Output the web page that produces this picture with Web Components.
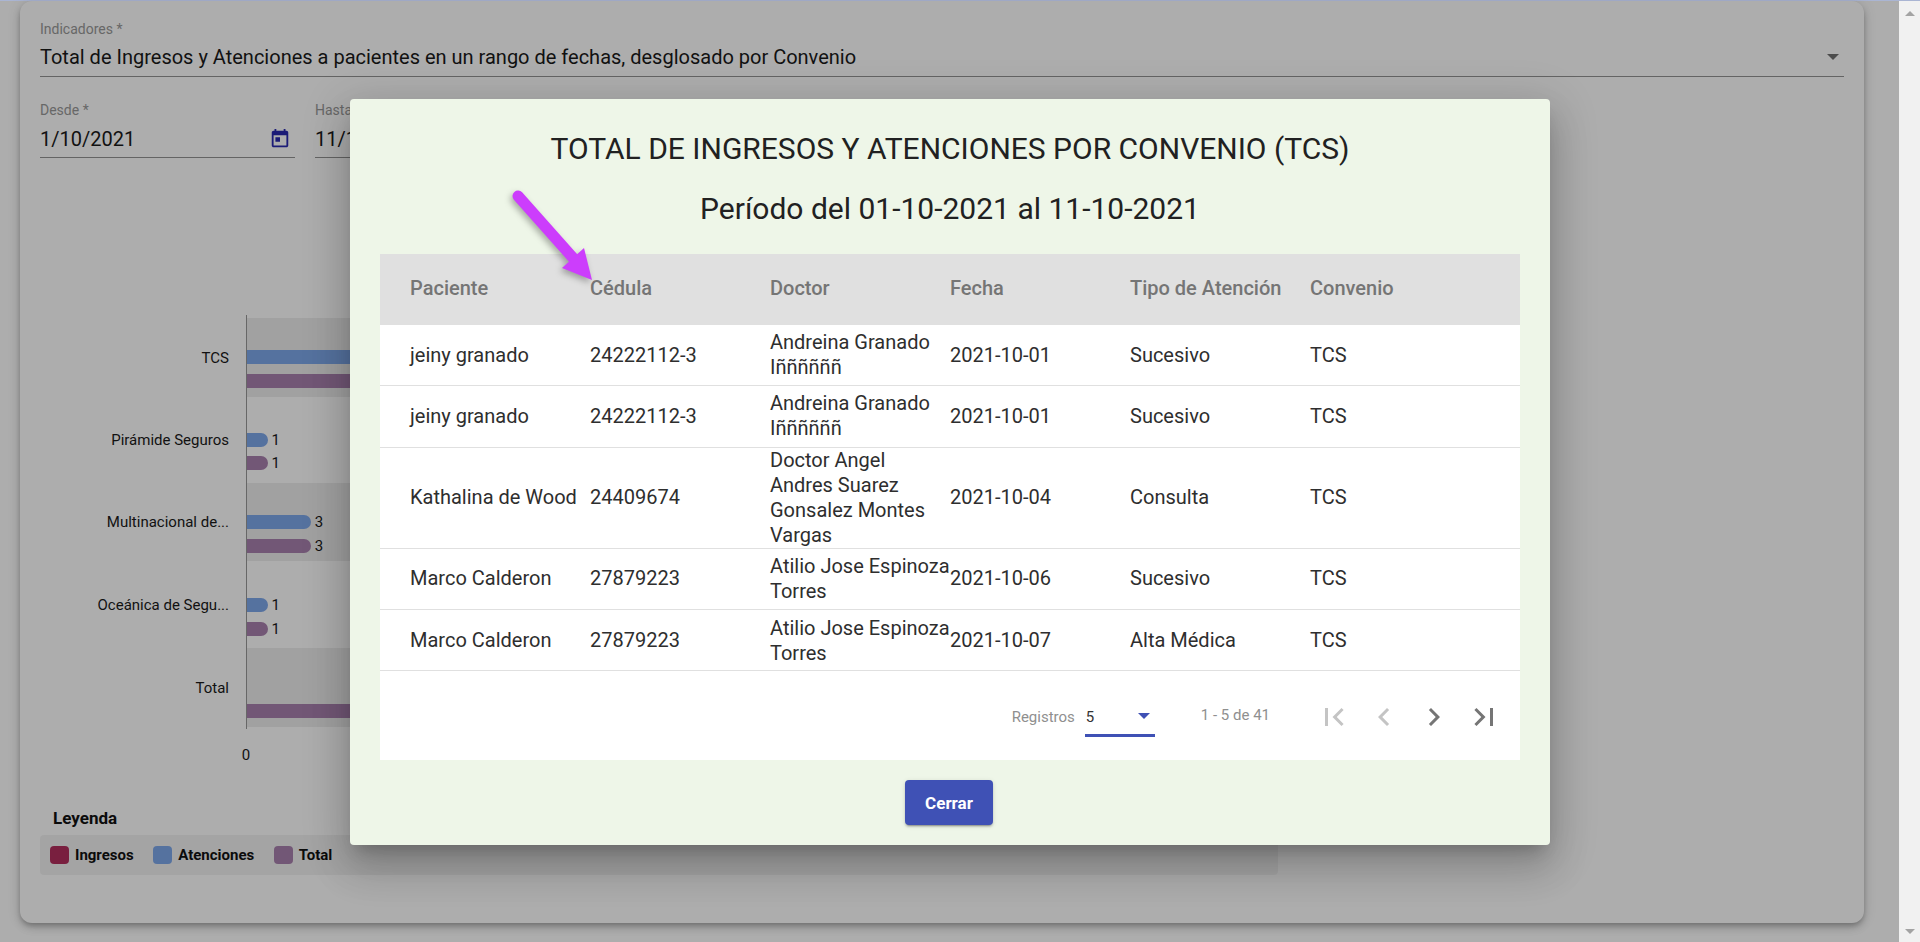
<!DOCTYPE html>
<html lang="es">
<head>
<meta charset="utf-8">
<title>Indicadores</title>
<style>
    html, body { margin: 0; height: 100%; overflow: hidden; }
    body { font-family: Roboto, "Liberation Sans", sans-serif; }
</style>
</head>
<body>
<app-shell>
    <report-card></report-card>
    <report-dialog slot="overlay"></report-dialog>
</app-shell>

<script>
class AppShell extends HTMLElement {
    constructor() {
        super();
        this.attachShadow({ mode: "open" });
        this.shadowRoot.innerHTML = `
            <style>
                :host {
                    display: flex;
                    flex-direction: column;
                    width: 1920px;
                    height: 942px;
                    background: #fff;
                }
                .topline { height: 1px; background: #aab5d3; flex: none; }
                .body { flex: 1; display: flex; min-height: 0; }
                main {
                    flex: 1;
                    position: relative;
                    padding: 0 35px 0 20px;
                    min-width: 0;
                }
                .backdrop {
                    position: absolute;
                    inset: 0;
                    padding: 1px 0 0 1px;
                    background: rgba(0, 0, 0, .32);
                    display: flex;
                    align-items: center;
                    justify-content: center;
                }
                .scrollbar {
                    width: 21px;
                    flex: none;
                    background: #f1f1f1;
                    display: flex;
                    flex-direction: column;
                    justify-content: space-between;
                    align-items: center;
                    padding: 10px 0 8px;
                    box-sizing: border-box;
                }
                .up, .down { width: 0; height: 0; border: 5px solid transparent; }
                .up { border-top: 0; border-bottom-color: #a3a3a3; }
                .down { border-bottom: 0; border-top-color: #a3a3a3; }
            </style>
            <div class="topline"></div>
            <div class="body">
                <main>
                    <slot></slot>
                    <div class="backdrop"><slot name="overlay"></slot></div>
                </main>
                <div class="scrollbar"><span class="up"></span><span class="down"></span></div>
            </div>
        `;
    }
}

class FormField extends HTMLElement {
    constructor() {
        super();
        this.attachShadow({ mode: "open" });
        this.shadowRoot.innerHTML = `
            <style>
                :host { display: block; }
                .label { font-size: 14px; line-height: 16px; color: #999; }
                .value {
                    display: flex;
                    justify-content: space-between;
                    align-items: center;
                    height: 24px;
                    margin-top: var(--value-top, 8px);
                    padding-bottom: var(--value-bottom, 7px);
                    border-bottom: 1px solid rgba(0, 0, 0, .42);
                    font-size: 20px;
                    line-height: 24px;
                    color: #1a1a1a;
                    white-space: nowrap;
                }
                ::slotted(svg) { display: block; flex: none; margin-right: 4px; }
                .arrow {
                    width: 0; height: 0;
                    margin-right: 5px;
                    border: 6px solid transparent;
                    border-bottom: 0;
                    border-top-color: #707070;
                }
            </style>
            <div class="label"></div>
            <div class="value"><span class="text"></span><slot></slot></div>
        `;
    }

    connectedCallback() {
        this.shadowRoot.querySelector(".label").textContent = this.getAttribute("label");
        this.shadowRoot.querySelector(".text").textContent = this.getAttribute("value");
        if (this.hasAttribute("select")) {
            const arrow = document.createElement("span");
            arrow.className = "arrow";
            this.shadowRoot.querySelector(".value").appendChild(arrow);
        }
    }
}

class BarChart extends HTMLElement {
    constructor() {
        super();
        this.attachShadow({ mode: "open" });
        // alto y margen de cada banda, tomados de la captura
        const bands = [
            { label: "TCS", h: 79, top: 32, gap: 10, dark: true, bars: [[1100, "a"], [1100, "t"]] },
            { label: "Pirámide Seguros", h: 86, top: 36, gap: 9, bars: [[1, "a"], [1, "t"]] },
            { label: "Multinacional de...", h: 78, top: 32, gap: 10, dark: true, bars: [[3, "a"], [3, "t"]] },
            { label: "Oceánica de Segu...", h: 87, top: 37, gap: 10, bars: [[1, "a"], [1, "t"]] },
            { label: "Total", h: 79, top: 56, gap: 0, dark: true, bars: [[1100, "t"]] }
        ];
        const rows = bands.map(b => `
            <div class="row" style="height:${b.h}px">
                <div class="name">${b.label}</div>
                <div class="band ${b.dark ? "dark" : ""}" style="padding-top:${b.top}px;gap:${b.gap}px">
                    ${b.bars.map(([v, k]) => v > 100
                        ? `<div class="line"><span class="bar ${k}" style="width:${v}px"></span></div>`
                        : `<div class="line"><span class="bar ${k}" style="width:${v * 21.6}px"></span><span class="num">${v}</span></div>`
                    ).join("")}
                </div>
            </div>`).join("");
        this.shadowRoot.innerHTML = `
            <style>
                :host { display: block; width: 1238px; font-size: 15px; color: #1a1a1a; }
                .plot { padding: 3px 0 2px; position: relative; }
                .plot::before {
                    content: "";
                    position: absolute;
                    left: 206px; top: 0; bottom: 0;
                    width: 1px;
                    background: #999;
                }
                .row { display: flex; }
                .name {
                    width: 189px;
                    padding-right: 17px;
                    flex: none;
                    display: flex;
                    align-items: center;
                    justify-content: flex-end;
                    line-height: 20px;
                    white-space: nowrap;
                }
                .band { flex: 1; display: flex; flex-direction: column; }
                .band.dark { background: rgba(0, 0, 0, .07); }
                .line { display: flex; align-items: center; height: 14px; }
                .bar { height: 14px; border-radius: 0 7px 7px 0; }
                .a { background: #7ea8eb; }
                .t { background: #a981ae; }
                .num { margin-left: 4px; line-height: 14px; }
                .axis { margin: 16px 0 0 200px; width: 12px; text-align: center; line-height: 20px; }
            </style>
            <div class="plot">${rows}</div>
            <div class="axis">0</div>
        `;
    }
}

class ChartLegend extends HTMLElement {
    constructor() {
        super();
        this.attachShadow({ mode: "open" });
        this.shadowRoot.innerHTML = `
            <style>
                :host { display: block; width: 1238px; color: #111; }
                h4 { margin: 0 0 7px 13px; font-size: 17px; line-height: 20px; font-weight: 700; }
                .box {
                    display: flex;
                    align-items: center;
                    gap: 19.5px;
                    height: 40px;
                    padding-left: 10px;
                    border-radius: 4px;
                    background: rgba(0, 0, 0, .05);
                    font-size: 15px;
                    font-weight: 700;
                }
                .item { display: flex; align-items: center; gap: 6px; }
                i { width: 19px; height: 18px; border-radius: 4px; }
            </style>
            <h4>Leyenda</h4>
            <div class="box">
                <div class="item"><i style="background:#b32f5e"></i>Ingresos</div>
                <div class="item"><i style="background:#7ea8eb"></i>Atenciones</div>
                <div class="item"><i style="background:#a981ae"></i>Total</div>
            </div>
        `;
    }
}

class ReportCard extends HTMLElement {
    constructor() {
        super();
        this.attachShadow({ mode: "open" });
        this.shadowRoot.innerHTML = `
            <style>
                :host {
                    display: block;
                    height: 922px;
                    box-sizing: border-box;
                    padding: 20px 20px 0;
                    border-radius: 12px;
                    background: #fff;
                    box-shadow: 0 3px 5px -1px rgba(0,0,0,.2), 0 5px 8px rgba(0,0,0,.14), 0 1px 14px rgba(0,0,0,.12);
                }
                .dates { display: flex; gap: 20px; margin-top: 25px; }
                .dates form-field { width: 255px; --value-top: 9px; --value-bottom: 6px; }
                bar-chart { margin-top: 157px; }
                chart-legend { margin-top: 43px; }
            </style>
            <form-field select label="Indicadores *" value="Total de Ingresos y Atenciones a pacientes en un rango de fechas, desglosado por Convenio"></form-field>
            <div class="dates">
                <form-field label="Desde *" value="1/10/2021">
                    <svg width="22" height="22" viewBox="0 0 24 24" fill="#2a2ab0"><path d="M19 3h-1V1h-2v2H8V1H6v2H5c-1.11 0-1.99.9-1.99 2L3 19c0 1.1.89 2 2 2h14c1.1 0 2-.9 2-2V5c0-1.1-.9-2-2-2zm0 16H5V8h14v11zM7 10h5v5H7z"/></svg>
                </form-field>
                <form-field label="Hasta *" value="11/10/2021"></form-field>
            </div>
            <bar-chart></bar-chart>
            <chart-legend></chart-legend>
        `;
    }
}

class DataTable extends HTMLElement {
    constructor() {
        super();
        this.attachShadow({ mode: "open" });
        const headers = ["Paciente", "Cédula", "Doctor", "Fecha", "Tipo de Atención", "Convenio"];
        const data = [
            ["jeiny granado", "24222112-3", ["Andreina Granado", "Iññññññ"], "2021-10-01", "Sucesivo", "TCS"],
            ["jeiny granado", "24222112-3", ["Andreina Granado", "Iññññññ"], "2021-10-01", "Sucesivo", "TCS"],
            ["Kathalina de Wood", "24409674", ["Doctor Angel", "Andres Suarez", "Gonsalez Montes", "Vargas"], "2021-10-04", "Consulta", "TCS"],
            ["Marco Calderon", "27879223", ["Atilio Jose Espinoza", "Torres"], "2021-10-06", "Sucesivo", "TCS"],
            ["Marco Calderon", "27879223", ["Atilio Jose Espinoza", "Torres"], "2021-10-07", "Alta Médica", "TCS"]
        ];
        const cell = c => Array.isArray(c)
            ? `<div class="cell">${c.map(l => `<div>${l}</div>`).join("")}</div>`
            : `<div class="cell">${c}</div>`;
        this.shadowRoot.innerHTML = `
            <style>
                :host { display: block; background: #fff; font-size: 20px; color: #2e2e2e; }
                .head, .row { display: grid; grid-template-columns: repeat(6, 180px); padding: 0 30px; }
                .head {
                    height: 71px;
                    background: #e0e0e0;
                    font-weight: 500;
                    color: #757575;
                }
                .head .cell { padding-bottom: 3px; }
                .row { min-height: 60.25px; border-bottom: 1px solid #e0e0e0; }
                .row.last .cell { padding-top: 2px; }
                .cell {
                    display: flex;
                    flex-direction: column;
                    justify-content: center;
                    line-height: 25px;
                    white-space: nowrap;
                }
            </style>
            <div class="head">${headers.map(cell).join("")}</div>
            ${data.map((r, i) => `<div class="row ${i === data.length - 1 ? "last" : ""}">${r.map(cell).join("")}</div>`).join("")}
            <slot></slot>
        `;
    }
}

class TablePaginator extends HTMLElement {
    constructor() {
        super();
        this.attachShadow({ mode: "open" });
        const icons = [
            ["M18.41 16.59L13.82 12l4.59-4.59L17 6l-6 6 6 6zM6 6h2v12H6z", "#c4c4c4"],
            ["M15.41 7.41L14 6l-6 6 6 6 1.41-1.41L10.83 12z", "#c4c4c4"],
            ["M10 6L8.59 7.41 13.17 12l-4.58 4.59L10 18l6-6z", "#757575"],
            ["M5.59 7.41L10.18 12l-4.59 4.59L7 18l6-6-6-6zM16 6h2v12h-2z", "#757575"]
        ];
        this.shadowRoot.innerHTML = `
            <style>
                :host {
                    display: flex;
                    justify-content: flex-end;
                    height: 89px;
                    box-sizing: border-box;
                    padding: 28px 18px 0 0;
                    font-size: 15px;
                    color: #8f8f8f;
                }
                .lbl { line-height: 36px; margin-right: 10px; }
                .select {
                    width: 70px;
                    height: 38px;
                    box-sizing: border-box;
                    border-bottom: 3px solid #3f51b5;
                    display: flex;
                    justify-content: space-between;
                    align-items: center;
                    padding: 0 5px 0 1px;
                    color: #333;
                    line-height: 36px;
                }
                .select::after {
                    content: "";
                    width: 0; height: 0;
                    margin-top: -1px;
                    border: 6px solid transparent;
                    border-bottom: 0;
                    border-top-color: #3f51b5;
                }
                .range { margin: 0 46px; line-height: 32px; }
                .pager { display: flex; gap: 14px; }
                svg { display: block; width: 36px; height: 36px; }
            </style>
            <span class="lbl">Registros</span>
            <div class="select">5</div>
            <span class="range">1 - 5 de 41</span>
            <div class="pager">
                ${icons.map(([d, c]) => `<svg viewBox="0 0 24 24" fill="${c}"><path d="${d}"/></svg>`).join("")}
            </div>
        `;
    }
}

class ReportDialog extends HTMLElement {
    constructor() {
        super();
        this.attachShadow({ mode: "open" });
        this.shadowRoot.innerHTML = `
            <style>
                :host {
                    display: block;
                    position: relative;
                    width: 1200px;
                    box-sizing: border-box;
                    padding: 32px 30px 20px;
                    border-radius: 4px;
                    background: #eef6e8;
                    color: #212121;
                    box-shadow: 0 11px 15px -7px rgba(0,0,0,.2), 0 24px 38px 3px rgba(0,0,0,.14), 0 9px 46px 8px rgba(0,0,0,.12);
                }
                h2 {
                    margin: 0;
                    font-size: 30px;
                    line-height: 36px;
                    font-weight: 400;
                    text-align: center;
                }
                h2 + h2 { margin: 24px 0 27px; }
                .actions { display: flex; justify-content: center; margin-top: 20px; padding-right: 2px; }
                button {
                    width: 88px;
                    height: 45px;
                    border: 0;
                    border-radius: 4px;
                    background: #3f51b5;
                    color: #fff;
                    font: 700 17px Roboto, "Liberation Sans", sans-serif;
                    box-shadow: 0 3px 1px -2px rgba(0,0,0,.2), 0 2px 2px rgba(0,0,0,.14), 0 1px 5px rgba(0,0,0,.12);
                }
                /* flecha de anotacion sobre la tabla */
                .pointer {
                    position: absolute;
                    left: 150px;
                    top: 81px;
                    overflow: visible;
                    filter: drop-shadow(-2px 3px 3px rgba(0,0,0,.3));
                }
            </style>
            <h2>TOTAL DE INGRESOS Y ATENCIONES POR CONVENIO (TCS)</h2>
            <h2>Período del 01-10-2021 al 11-10-2021</h2>
            <data-table><table-paginator></table-paginator></data-table>
            <div class="actions"><button>Cerrar</button></div>
            <svg class="pointer" width="110" height="110" viewBox="500 180 110 110">
                <path d="M518 196L574 259" stroke="#cc3dfc" stroke-width="11" stroke-linecap="round" fill="none"/>
                <path d="M592 280L584 248L562 268Z" fill="#cc3dfc"/>
            </svg>
        `;
    }
}

customElements.define("app-shell", AppShell);
customElements.define("form-field", FormField);
customElements.define("bar-chart", BarChart);
customElements.define("chart-legend", ChartLegend);
customElements.define("report-card", ReportCard);
customElements.define("table-paginator", TablePaginator);
customElements.define("data-table", DataTable);
customElements.define("report-dialog", ReportDialog);
</script>
</body>
</html>
